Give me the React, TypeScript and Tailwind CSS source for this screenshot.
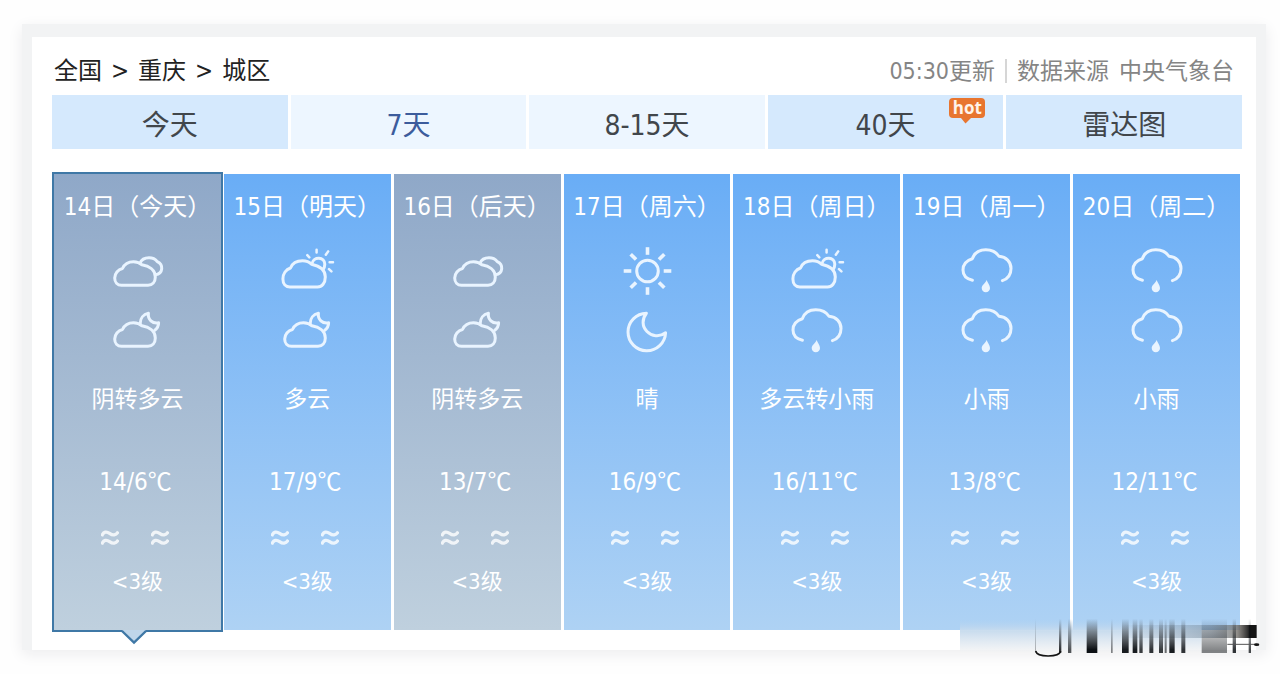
import { Fragment } from 'react';
import type { ReactNode } from 'react';
import clsx from 'clsx';

type IconName = 'overcast' | 'cloudyDay' | 'cloudyNight' | 'sun' | 'moon' | 'rain';

interface Day {
  date: string;
  day: IconName;
  night: IconName;
  text: string;
  temp: string;
  wind: string;
  gray?: boolean;
}

const crumbs = ['全国', '重庆', '城区'];

const tabs = [
  { label: '今天' },
  { label: '7天', active: true },
  { label: '8-15天', light: true },
  { label: '40天', hot: true },
  { label: '雷达图' },
];

const days: Day[] = [
  { date: '14日（今天）', day: 'overcast', night: 'cloudyNight', text: '阴转多云', temp: '14/6', wind: '<3级', gray: true },
  { date: '15日（明天）', day: 'cloudyDay', night: 'cloudyNight', text: '多云', temp: '17/9', wind: '<3级' },
  { date: '16日（后天）', day: 'overcast', night: 'cloudyNight', text: '阴转多云', temp: '13/7', wind: '<3级', gray: true },
  { date: '17日（周六）', day: 'sun', night: 'moon', text: '晴', temp: '16/9', wind: '<3级' },
  { date: '18日（周日）', day: 'cloudyDay', night: 'rain', text: '多云转小雨', temp: '16/11', wind: '<3级' },
  { date: '19日（周一）', day: 'rain', night: 'rain', text: '小雨', temp: '13/8', wind: '<3级' },
  { date: '20日（周二）', day: 'rain', night: 'rain', text: '小雨', temp: '12/11', wind: '<3级' },
];

const cloud =
  'M15.5 27.5 C17.5 23 21.5 20.7 26.5 20.7 C30 20.7 32.8 21.7 35 23.8 C42 25 48.3 29 48.3 36 C48.3 41 45.3 44.3 41 44.3 H14.5 C10.3 44.3 7.7 41 7.7 37 C7.7 32.5 11 28.5 15.5 27.5 Z';

const icons: Record<IconName, ReactNode> = {
  overcast: (
    <>
      <path d={cloud} />
      <path d="M33 22.3 C34.5 18.5 38 16.8 42 16.8 C45.5 16.8 48.5 18.3 50.3 20.6 C56.5 23.5 56.5 32.5 48.3 33.8" />
    </>
  ),
  cloudyDay: (
    <>
      <path d="M13.5 27 C15.5 22 20 19.8 25.5 19.8 C29.3 19.8 32.3 20.9 34.5 23.2 C42 24.7 48.3 28.7 48.3 36 C48.3 42 45 46 40.5 46 H13 C8.5 46 5.9 42.5 5.9 38 C5.9 33 9 28.5 13.5 27 Z" />
      <path d="M35 22.5 C36.5 15 47.8 15.5 47.8 23.3 C47.8 25.5 47.2 27 46 28.5" />
      <path strokeWidth="2.5" d="M30.3 14.2 L32.3 16.4 M39.6 8.8 V11.6 M51.2 10.4 L48.8 13.8 M52.6 21.2 H56 M52 28.2 L54.4 30.4" />
    </>
  ),
  cloudyNight: (
    <g transform="translate(0 1)">
      <path d={cloud} />
      <path d="M33.2 21.5 C33.2 16.5 36.3 12.2 41.4 11.3 C40.6 17.5 45.5 22 51.6 20.8 C51.6 24 50.4 26.3 47.8 28.2" />
    </g>
  ),
  sun: (
    <>
      <circle cx="30.5" cy="30" r="10.8" />
      {[0, 45, 90, 135, 180, 225, 270, 315].map((angle) => (
        <path key={angle} strokeLinecap="butt" strokeWidth="3.6" d="M30.5 6.2 V13.8" transform={`rotate(${angle} 30.5 30)`} />
      ))}
    </>
  ),
  moon: <path d="M29.4 12.2 A18.8 18.8 0 1 0 48.6 31.8 C42.5 36.5 34.5 35.2 30 30.5 C25 25.5 24.8 18 29.4 12.2 Z" />,
  rain: (
    <>
      <path d="M15.4 39.2 C10 38 6 34.5 6 29 C6 23.2 10 19.5 15.3 17.8 C17.3 12.2 22.5 8.8 28.8 8.8 C34.6 8.8 39.3 11.2 42 15.3 C49.2 16 54 20.6 54 27.4 C54 33.3 50.6 37.8 45.4 39.6" />
      <path fill="currentColor" stroke="none" d="M29.6 39 C30.6 42 33 44 33 47 C33 49.6 31.2 51.2 28.8 51.2 C26.4 51.2 24.7 49.6 24.7 47 C24.7 44 28.4 42.4 29.6 39 Z" />
    </>
  ),
};

function WeatherIcon({ name }: { name: IconName }) {
  return (
    <svg
      viewBox="0 0 60 60"
      className="size-[60px] text-[#e9f4ff]"
      fill="none"
      stroke="currentColor"
      strokeWidth="3"
      strokeLinecap="round"
      strokeLinejoin="round"
      aria-hidden="true">
      {icons[name]}
    </svg>
  );
}

function WindIcon() {
  return (
    <svg viewBox="0 0 18 16" className="h-4 w-[18px] text-white/80" fill="none" stroke="currentColor" strokeWidth="3.2" aria-hidden="true">
      <path d="M0.6 6.2 C2.4 1.2 5.8 1.4 8.6 3.4 C11.6 5.6 15 5.8 17.4 1.6" />
      <path d="M0.6 14.4 C2.4 9.4 5.8 9.6 8.6 11.6 C11.6 13.8 15 14 17.4 9.8" />
    </svg>
  );
}

function HotBadge() {
  return (
    <span className="absolute right-[18px] top-[3px] flex h-5 w-9 items-center justify-center rounded-sm bg-[#e8752f] font-['Open_Sans',sans-serif] text-[17px] font-bold leading-5 text-[#fff3ea]">
      hot
      <svg viewBox="0 0 10 6" className="absolute left-3 top-full h-1.5 w-2.5 text-[#e8752f]" fill="currentColor" aria-hidden="true">
        <path d="M0 0 H10 L4.5 5.5 Z" />
      </svg>
    </span>
  );
}

function DayColumn({ item, selected }: { item: Day; selected: boolean }) {
  return (
    <li
      className={clsx(
        'relative flex flex-col items-center bg-linear-to-b pb-7 pt-[13px] text-white',
        item.gray ? 'from-[#8fa8c8] to-[#bfd0de]' : 'from-[#69adf6] to-[#aed2f4]',
        selected && 'ring-2 ring-[#3f78a6]',
      )}>
      <h2 className="whitespace-nowrap text-[24px] leading-10">{item.date}</h2>
      <div className="mt-3.5 flex flex-col">
        <WeatherIcon name={item.day} />
        <WeatherIcon name={item.night} />
      </div>
      <p className="mt-[18px] whitespace-nowrap text-[23px] leading-10">{item.text}</p>
      <p className="mt-[41px] pr-1 text-[24px] leading-10">
        {item.temp}
        <span className="font-['Noto_Sans_CJK_SC',sans-serif]">℃</span>
      </p>
      <div className="mt-7 flex gap-8 pr-1">
        <WindIcon />
        <WindIcon />
      </div>
      <p className="mt-4 text-[22px] leading-10">{item.wind}</p>
      {selected && (
        <svg viewBox="0 0 26 15" className="absolute left-[67px] top-full h-[15px] w-[26px]" aria-hidden="true">
          <path d="M1 0 L13 12 L25 0 Z" fill="#bfd6ea" />
          <path d="M1 1 L13 12.5 L25 1" fill="none" stroke="#3f78a6" strokeWidth="2.4" />
        </svg>
      )}
    </li>
  );
}

// [x, width, opacity]
const bars = [
  [345, 3, 0.3],
  [417, 7, 0.85],
  [444, 10, 0.7],
  [500, 32, 1],
  [573, 5, 0.5],
  [606, 20, 0.95],
  [638, 14, 0.95],
  [658, 10, 0.8],
  [688, 12, 0.85],
  [717, 12, 0.8],
  [734, 6, 0.6],
  [748, 16, 0.95],
  [784, 12, 0.85],
  [845, 76, 0.5],
  [938, 10, 0.85],
  [986, 7, 0.75],
];

function Streaks() {
  return (
    <svg viewBox="120 84 900 120" className="pointer-events-none absolute -bottom-2 -right-1 h-10 w-[300px]" aria-hidden="true">
      <defs>
        <linearGradient id="streak" x1="0" y1="0" x2="0" y2="1">
          <stop offset="0" stopColor="#0c1014" stopOpacity="0" />
          <stop offset="0.35" stopColor="#0c1014" stopOpacity="0.4" />
          <stop offset="0.9" stopColor="#0c1014" />
        </linearGradient>
        <linearGradient id="haze" x1="0" y1="0" x2="0" y2="1">
          <stop offset="0" stopColor="#b5d3ef" stopOpacity="0" />
          <stop offset="0.35" stopColor="#c9dcee" />
          <stop offset="1" stopColor="#f4f4f4" stopOpacity="0.8" />
        </linearGradient>
        <linearGradient id="band" x1="0" y1="0" x2="1" y2="0">
          <stop offset="0" stopColor="#7d93a8" stopOpacity="0" />
          <stop offset="0.7" stopColor="#6f8293" stopOpacity="0.5" />
          <stop offset="0.9" stopColor="#77736d" stopOpacity="0.8" />
          <stop offset="1" stopColor="#1a1a1a" />
        </linearGradient>
      </defs>
      <rect x="120" y="88" width="725" height="100" fill="url(#haze)" />
      <rect x="600" y="105" width="390" height="39" fill="url(#band)" />
      <rect x="988" y="105" width="22" height="39" fill="#141414" />
      {bars.map(([x, width, opacity]) => (
        <rect key={x} x={x} y="86" width={width} height="103" fill="url(#streak)" opacity={opacity} />
      ))}
      <path d="M347 183 C352 203 417 203 422 183" fill="none" stroke="#141414" strokeWidth="5" />
      <path d="M922 163 H1010" stroke="#555" strokeWidth="3" />
      <ellipse cx="1010" cy="164" rx="8" ry="4" fill="#141414" />
    </svg>
  );
}

export default function App() {
  return (
    <div className="bg-[#fefefe] px-[22px] pb-6 pt-6 font-['DejaVu_Sans_Condensed','Noto_Sans_CJK_SC',sans-serif]">
      <div className="-mr-2 bg-[#f2f3f4] px-2.5 pt-[13px] shadow-[0_4px_14px_0_#ececee]">
        <main className="relative bg-white pb-5 pl-5 pr-3.5 pt-3.5">
          <header className="mb-1 flex items-center justify-between leading-10">
            <nav className="flex gap-[9px] pl-0.5 text-[24px] text-[#222]" aria-label="位置">
              {crumbs.map((name, i) => (
                <Fragment key={name}>
                  {i > 0 && <span>&gt;</span>}
                  <a href="#">{name}</a>
                </Fragment>
              ))}
            </nav>
            <p className="flex items-center pr-2 text-[23px] text-[#858585]">
              <span>05:30更新</span>
              <span className="mx-2.5 h-6 w-0.5 bg-[#d6d6d6]" />
              <span className="mr-2.5">数据来源</span>
              <span>中央气象台</span>
            </p>
          </header>

          <nav className="grid grid-cols-5 gap-[3px]" aria-label="预报">
            {tabs.map((tab) => (
              <a
                key={tab.label}
                href="#"
                className={clsx(
                  'relative flex h-[54px] items-center justify-center pt-2 text-[28px]',
                  tab.active || tab.light ? 'bg-[#edf6ff]' : 'bg-[#d5e9fd]',
                  tab.active ? 'text-[#3c5c9c]' : 'text-[#41464b]',
                )}>
                {tab.label}
                {tab.hot && <HotBadge />}
              </a>
            ))}
          </nav>

          <ul className="mt-[25px] grid grid-cols-7 gap-[3px] px-0.5">
            {days.map((item, i) => (
              <DayColumn key={item.date} item={item} selected={i === 0} />
            ))}
          </ul>
          <Streaks />
        </main>
      </div>
    </div>
  );
}
